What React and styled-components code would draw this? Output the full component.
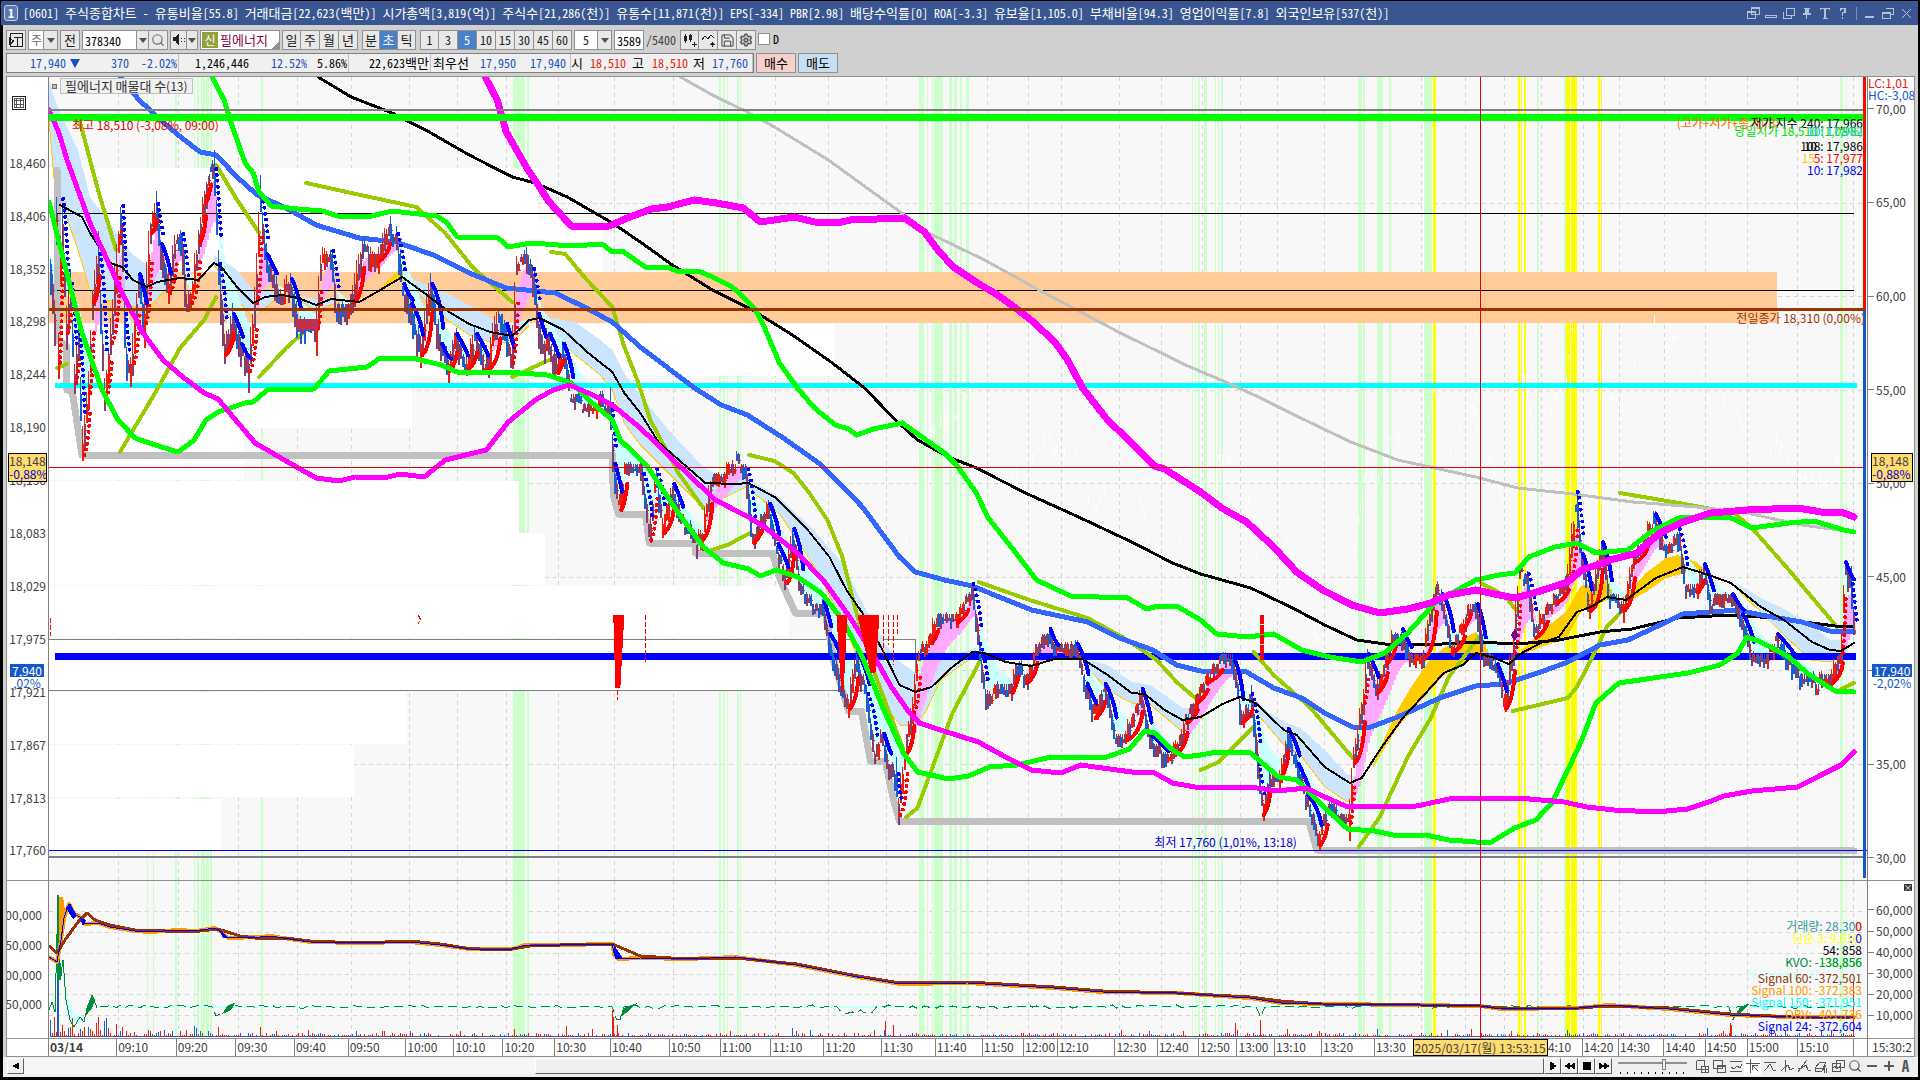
import React, {useState} from 'react';
import styled, {createGlobalStyle, css} from 'styled-components';
import {Search, Save, Settings} from 'lucide-react';


const TITLE = '[0601] 주식종합차트 - 유통비율[55.8] 거래대금[22,623(백만)] 시가총액[3,819(억)] 주식수[21,286(천)] 유통수[11,871(천)] EPS[-334] PBR[2.98] 배당수익률[0] ROA[-3.3] 유보율[1,105.0] 부채비율[94.3] 영업이익률[7.8] 외국인보유[537(천)]'

const priceLabels = ['18,460', '18,406', '18,352', '18,298', '18,244', '18,190', '18,136', '18,083', '18,029', '17,975', '17,921', '17,867', '17,813', '17,760']
const ratioLabels = ['70,00', '65,00', '60,00', '55,00', '50,00', '45,00', '40,00', '35,00', '30,00']
const obvLabels = ['00,000', '50,000', '00,000', '50,000']
const volumeLabels = ['60,000', '50,000', '40,000', '30,000', '20,000', '10,000']

// [x, label] for every vertical grid line
const ticks = [
    [49, '03/14'], [118, '09:10'], [178, '09:20'], [238, '09:30'], [297, '09:40'], [351, '09:50'],
    [409, '10:00'], [457, '10:10'], [506, '10:20'], [558, '10:30'], [614, '10:40'], [673, '10:50'],
    [724, '11:00'], [775, '11:10'], [828, '11:20'], [886, '11:30'], [940, '11:40'], [987, '11:50'],
    [1028, '12:00'], [1061, '12:10'], [1119, '12:30'], [1161, '12:40'], [1202, '12:50'], [1240, '13:00'],
    [1277, '13:10'], [1324, '13:20'], [1377, '13:30'], [1421, '13:40'], [1465, '13:50'], [1504, '14:00'],
    [1541, '14:10'], [1583, '14:20'], [1619, '14:30'], [1664, '14:40'], [1705, '14:50'], [1747, '15:00'],
    [1797, '15:10'], [1853, ''],
]

// [x, width] of the signal stripes
const greenStripes = [
    [147, 1], [153, 1], [175, 2], [194, 1], [197, 2], [201, 4], [206, 3], [210, 2], [261, 2], [513, 12], [527, 2],
    [719, 2], [723, 2], [727, 1], [737, 2], [740, 1], [919, 5], [927, 1], [932, 1], [934, 9], [949, 3], [954, 3],
    [959, 2], [965, 3], [1191, 1], [1194, 1], [1197, 2], [1203, 3], [1214, 1], [1217, 1], [1220, 2], [1357, 4],
    [1362, 2], [1376, 6], [1388, 2], [1423, 8], [1536, 2], [1563, 2], [1839, 3], [1845, 1],
]
const yellowStripes = [[1432, 3], [1517, 2], [1520, 1], [1523, 2], [1565, 4], [1570, 6], [1597, 2], [1600, 1]]

// volume profile: [top, right edge]
const profile = [
    [168, 538], [220, 603], [324, 834], [376, 412], [428, 244], [481, 519], [533, 545], [586, 789],
    [639, 915], [692, 406], [745, 354], [799, 221],
]

const upperMagenta = '485,77 497,100 506,132 526,167 549,202 571,226 609,226 627,218 651,209 667,207 694,200 716,203 743,208 760,222 794,217 814,222 837,223 850,220 904,218 924,232 939,252 953,267 977,283 997,295 1015,308 1033,322 1055,343 1067,360 1082,388 1107,420 1131,443 1154,466 1164,469 1200,492 1221,508 1246,522 1273,547 1296,572 1322,590 1351,605 1379,613 1407,609 1430,603 1448,595 1475,590 1494,594 1514,598 1533,593 1567,582 1581,570 1613,559 1636,553 1659,533 1682,522 1710,513 1746,510 1797,508 1820,512 1843,513 1853,517'
const lowerMagenta = '49,110 59,133 67,160 90,223 104,253 122,293 143,333 163,360 184,378 204,393 218,399 233,417 255,443 286,461 316,478 339,481 355,477 384,478 400,474 424,477 445,460 486,450 508,422 535,400 553,390 569,385 588,393 612,405 640,428 678,465 715,500 748,517 764,527 797,553 825,583 850,618 874,657 891,687 907,710 919,723 940,730 978,742 1005,757 1031,770 1060,773 1080,765 1131,772 1154,773 1172,783 1200,788 1250,787 1276,791 1306,788 1324,797 1347,807 1416,806 1453,798 1517,798 1563,802 1586,807 1613,810 1655,812 1687,809 1705,803 1723,796 1751,791 1797,787 1820,775 1840,765 1853,752'
const upperGreen = '212,77 224,100 231,123 245,163 253,173 259,192 271,206 298,209 322,211 337,216 367,217 392,211 437,216 447,223 457,237 498,238 508,247 531,243 571,246 602,244 612,252 622,251 645,267 667,267 676,271 698,271 712,277 732,287 754,308 763,325 779,363 797,388 814,408 835,425 848,429 856,435 873,429 902,423 944,453 956,465 976,493 987,517 1013,550 1036,580 1070,596 1127,598 1146,609 1158,606 1176,606 1200,620 1216,634 1246,637 1273,634 1301,650 1329,657 1361,662 1384,653 1407,633 1434,603 1453,592 1475,580 1498,575 1514,573 1528,557 1554,547 1576,543 1595,553 1627,550 1650,532 1678,518 1728,517 1751,528 1788,523 1813,521 1843,530 1853,532'
const lowerGreen = '49,202 61,250 82,333 102,390 118,420 135,438 155,445 178,452 194,440 206,420 218,412 245,403 253,402 267,390 314,389 329,371 367,367 380,358 412,358 441,365 457,372 506,372 547,375 571,383 592,403 612,420 620,440 646,465 678,513 703,547 723,563 748,569 760,576 776,570 797,577 821,593 842,620 862,657 882,707 903,753 917,772 948,779 968,776 989,767 1017,765 1050,757 1103,758 1129,749 1144,731 1154,733 1172,750 1184,757 1200,755 1216,752 1250,753 1278,777 1296,780 1319,803 1347,829 1374,831 1397,836 1425,835 1448,840 1489,843 1514,828 1535,820 1551,803 1567,770 1581,740 1595,703 1618,683 1659,677 1687,673 1719,665 1737,653 1746,637 1760,642 1788,657 1806,673 1834,691 1853,692'
const blueAverage = '120,77 139,100 163,122 178,135 200,152 216,155 237,177 257,195 286,208 316,225 359,238 396,242 433,255 469,273 506,288 555,293 584,307 612,322 640,347 694,388 721,405 747,415 783,438 821,465 862,507 899,557 915,572 944,580 972,586 1001,598 1031,610 1087,622 1119,638 1152,650 1176,665 1200,671 1246,672 1273,688 1301,698 1324,713 1352,727 1370,727 1397,717 1439,698 1475,686 1503,684 1540,672 1567,662 1599,645 1627,640 1655,627 1682,614 1737,610 1760,615 1801,622 1829,631 1853,632'
const longAverage = '318,77 351,97 392,113 429,132 469,155 512,177 535,183 567,197 612,223 640,242 672,265 712,290 752,310 792,335 832,363 864,388 895,420 917,440 948,457 976,468 1025,493 1078,517 1131,542 1172,563 1200,574 1250,588 1292,608 1324,625 1356,640 1384,644 1425,645 1475,642 1517,644 1558,640 1599,632 1631,629 1677,618 1728,615 1774,618 1811,623 1834,626 1853,626'
const greyAverage = '680,77 712,95 747,112 774,127 828,160 872,192 904,215 926,232 984,260 1042,292 1118,332 1185,365 1225,382 1260,398 1300,418 1350,442 1397,460 1475,477 1517,488 1572,494 1632,502 1696,507 1746,513 1801,525 1853,532'
const shortAverage = '60,205 82,217 90,233 110,263 122,267 133,280 147,287 157,282 180,278 198,280 214,263 222,268 237,287 253,303 265,297 282,295 298,298 316,305 331,299 359,302 380,290 402,277 424,293 449,312 469,324 490,332 512,336 529,320 539,318 563,330 588,353 612,372 624,393 640,413 658,442 682,463 705,483 736,484 748,483 776,498 805,527 829,557 846,590 862,613 882,650 899,685 915,692 931,687 952,667 972,652 984,653 1005,662 1031,666 1054,659 1082,659 1107,675 1131,693 1144,694 1164,710 1182,720 1200,717 1222,704 1239,697 1255,703 1283,730 1296,735 1324,767 1349,783 1361,778 1379,750 1402,718 1425,693 1443,673 1462,665 1475,653 1494,658 1508,664 1521,653 1540,643 1558,637 1576,612 1590,607 1606,597 1625,600 1655,578 1682,567 1705,574 1730,583 1760,607 1783,620 1811,642 1829,650 1840,651 1853,643'
const stepLow = '57,170 57,340 66,345 67,390 72,390 82,455 612,455 613,495 618,514 645,514 649,543 695,543 695,553 772,553 780,580 795,613 825,613 833,660 848,711 861,711 870,761 885,762 893,800 899,821 1308,821 1316,850 1853,851'

const oliveLines = [
    '80,122 90,160 98,190 116,250', '216,165 237,200 259,233',
    '306,183 351,193 416,207 445,233 473,268 512,302',
    '551,252 565,254 584,277 612,307 624,347 637,380 650,420 678,473 703,508',
    '120,452 155,393 180,348 204,320 216,297', '259,377 286,348 306,330', '57,368 67,364', '512,377 551,359',
    '711,550 727,545 750,533', '749,455 774,461 793,473 809,493 827,520 842,557 856,613 874,673 903,750',
    '906,817 917,808 931,770 952,713 980,660', '978,582 1029,600 1087,618 1127,640 1156,660 1176,682 1197,700',
    '1200,770 1218,762 1253,727', '1253,652 1273,675 1310,708 1352,758',
    '1358,847 1379,817 1407,757 1430,718 1448,677 1478,637', '1480,583 1503,595 1517,612',
    '1512,711 1567,698 1576,687 1590,660 1606,627 1620,612',
    '1619,493 1678,503 1733,513 1751,528 1788,570 1836,627', '1840,689 1853,683',
]

// clouds: [x, top, bottom]
const blueClouds = [
    [[49, 80, 120], [55, 100, 190], [66, 125, 215], [78, 150, 250], [90, 197, 290], [102, 213, 300], [118, 235, 300], [131, 253, 305], [147, 265, 310], [165, 275, 290]],
    [[214, 255, 265], [237, 270, 300], [253, 290, 318], [275, 292, 300]],
    [[298, 296, 299], [316, 299, 311], [340, 299, 301]],
    [[402, 275, 277], [440, 290, 315], [469, 305, 335], [490, 318, 342], [512, 325, 343], [529, 318, 325]],
    [[539, 316, 320], [575, 322, 355], [600, 340, 375], [612, 350, 390], [625, 375, 425], [640, 395, 445], [670, 432, 475], [703, 467, 508], [723, 477, 498], [746, 477, 487], [780, 498, 515], [813, 530, 565], [842, 563, 620], [862, 603, 670], [887, 647, 710], [900, 662, 725], [915, 673, 725], [925, 680, 712], [940, 660, 680], [975, 648, 655]],
    [[1080, 658, 660], [1107, 665, 690], [1131, 682, 703], [1150, 685, 705], [1182, 708, 732], [1205, 708, 715]],
    [[1250, 700, 706], [1283, 722, 745], [1300, 728, 755], [1324, 750, 787], [1347, 775, 802], [1361, 777, 782]],
    [[1735, 583, 588], [1760, 598, 612], [1785, 610, 637], [1810, 626, 660], [1830, 640, 662], [1845, 640, 650]],
]
const yellowClouds = [
    [[380, 288, 291], [400, 268, 279], [410, 280, 284]],
    [[1372, 765, 768], [1395, 713, 730], [1410, 688, 712], [1430, 658, 690], [1443, 648, 675], [1460, 640, 666], [1475, 632, 656], [1485, 642, 658], [1503, 660, 664]],
    [[1521, 650, 655], [1545, 628, 645], [1565, 612, 640], [1580, 586, 612], [1606, 580, 600], [1618, 592, 600]],
    [[1625, 595, 603], [1645, 573, 592], [1665, 558, 578], [1677, 555, 575], [1695, 562, 570], [1708, 572, 576]],
]

// turning points of the price
const pricePath = [
    [49, 255], [53, 300], [55, 330], [57, 105], [58, 360], [61, 205], [66, 330], [70, 290], [74, 380], [78, 340], [82, 452],
    [88, 390], [92, 300], [98, 260], [104, 395], [110, 340], [118, 240], [121, 212], [124, 320], [127, 375], [132, 360], [138, 280],
    [144, 320], [150, 230], [156, 210], [160, 250], [168, 290], [175, 240], [181, 240], [186, 305], [190, 300],
    [198, 240], [204, 200], [209, 172], [214, 175], [218, 270], [224, 352], [232, 320], [240, 350], [248, 368],
    [255, 300], [260, 202], [265, 260], [274, 285], [280, 300], [290, 285], [298, 325], [316, 325], [320, 265],
    [331, 257], [336, 310], [345, 315], [352, 300], [362, 248], [370, 260], [378, 258], [388, 232], [396, 240],
    [402, 290], [410, 310], [420, 352], [430, 290], [440, 350], [448, 368], [455, 340], [465, 368], [475, 340],
    [485, 368], [498, 320], [505, 330], [511, 360], [516, 270], [525, 258], [532, 275], [537, 320], [543, 350],
    [548, 340], [556, 370], [562, 350], [570, 395], [580, 404], [588, 410], [600, 403], [610, 410], [613, 470],
    [619, 507], [625, 468], [638, 468], [642, 480], [649, 537], [655, 475], [662, 530], [672, 490], [680, 520],
    [688, 530], [696, 547], [702, 535], [710, 485], [722, 480], [730, 468], [737, 463], [746, 475], [752, 540],
    [760, 520], [768, 510], [776, 550], [785, 580], [792, 535], [800, 590], [812, 605], [822, 607], [828, 640],
    [840, 690], [848, 705], [856, 660], [866, 700], [874, 757], [882, 740], [888, 765], [896, 780], [898, 812],
    [905, 750], [912, 710], [918, 655], [930, 640], [936, 620], [955, 620], [966, 600], [971, 590], [978, 650],
    [985, 705], [995, 690], [1010, 690], [1016, 665], [1025, 680], [1035, 650], [1048, 635], [1055, 655],
    [1075, 650], [1085, 690], [1093, 715], [1103, 690], [1113, 735], [1125, 737], [1140, 695], [1148, 740],
    [1165, 762], [1175, 750], [1185, 720], [1195, 700], [1205, 680], [1220, 660], [1232, 665], [1240, 720],
    [1250, 700], [1257, 770], [1261, 812], [1268, 775], [1278, 775], [1286, 735], [1296, 770], [1305, 800],
    [1318, 842], [1325, 812], [1335, 815], [1348, 820], [1352, 760], [1362, 700], [1366, 660], [1375, 690], [1385, 660],
    [1393, 635], [1400, 635], [1408, 658], [1422, 655], [1434, 588], [1440, 600], [1450, 650], [1462, 625],
    [1468, 605], [1475, 610], [1482, 655], [1495, 670], [1503, 706], [1512, 650], [1518, 573], [1526, 580],
    [1533, 635], [1545, 610], [1555, 600], [1566, 580], [1575, 498], [1580, 560], [1588, 608], [1600, 548],
    [1608, 600], [1622, 607], [1632, 560], [1645, 535], [1653, 520], [1662, 550], [1668, 550], [1677, 535],
    [1684, 585], [1695, 590], [1702, 570], [1710, 605], [1730, 600], [1740, 620], [1750, 657], [1765, 657],
    [1775, 640], [1790, 665], [1800, 678], [1815, 686], [1830, 680], [1840, 650], [1843, 568], [1850, 590], [1853, 640],
]

const obvBrown = '49,946 57,953 65,940 78,922 87,913 95,920 110,925 135,930 165,931 200,931 218,929 240,936 255,938 285,938 310,941 360,943 410,941 440,944 465,948 495,950 512,949 530,946 560,945 612,944 640,956 686,959 735,958 796,964 857,976 900,983 967,982 1053,987 1102,991 1176,993 1249,997 1280,1001 1321,1004 1419,1005 1480,1006 1500,1008 1578,1008 1607,1006 1668,1008 1729,1014 1790,1017 1853,1018'
const obvBlue = '49,957 57,962 61,940 64,918 69,904 74,914 80,917 85,924 98,923 110,927 135,931 150,932 178,930 196,931 214,928 220,931 228,938 260,937 270,936 310,942 360,943 410,942 440,945 470,949 512,949 525,945 560,945 612,944 614,955 618,959 640,958 686,959 735,957 796,965 857,977 900,984 967,983 1053,988 1102,992 1176,993 1249,998 1280,1003 1321,1004 1419,1005 1480,1006 1500,1009 1578,1008 1607,1005 1668,1009 1729,1015 1790,1017 1853,1017'

let seed = 7

const random = () => {
    seed = (seed * 16807) % 2147483647
    return seed / 2147483647
}

const cloudPoints = cloud => [
    ...cloud.map(([x, top]) => `${x},${top}`),
    ...[...cloud].reverse().map(([x, , bottom]) => `${x},${bottom}`),
].join(' ')

const priceAt = x => {
    const i = Math.max(1, pricePath.findIndex(p => p[0] >= x))
    const [x0, y0] = pricePath[i - 1]
    const [x1, y1] = pricePath[i]
    return y0 + (y1 - y0) * (x - x0) / (x1 - x0)
}

const buildCandles = () => {
    const candles = {up: '', down: '', pink: '', aqua: '', ghost: ''}
    let fast = priceAt(49)
    let slow = fast

    for (let x = 50; x < 1854; x += 2) {
        const price = priceAt(x)
        const next = priceAt(Math.min(x + 2, 1853))
        const step = Math.round(price / 10) * 10
        const reach = Math.min(30, Math.abs(next - price))
        const wick = x < 560 ? 15 : 9
        const high = Math.round(step - random() * wick - reach / 2)
        const low = Math.round(step + random() * wick + reach / 2)
        const side = next < price ? 'up' : 'down'
        const other = side === 'up' ? 'down' : 'up'

        candles[side] += `M${x + 0.5} ${high}V${low}M${x} ${step + 0.5}h3`
        candles[random() > 0.45 ? other : side] += `M${x + 1.5} ${step - 6}V${low}`
        fast += (price - fast) * 0.35
        slow += (price - slow) * 0.1
        candles[fast < slow ? 'pink' : 'aqua'] += `M${x} ${Math.round(fast)}V${Math.round(slow)}`
        if (x > 880 && random() > 0.5) {
            candles.ghost += `M${x} ${step - 205}v${Math.round(random() * 10) + 2}`
        }
    }
    return candles
}

// parabolic dots trailing each leg of the price
const buildTrails = () => {
    const trails = []
    for (let i = 1; i < pricePath.length; i++) {
        const [x0, y0] = pricePath[i - 1]
        const [x1, y1] = pricePath[i]
        const size = Math.abs(y1 - y0)
        if (size < 18 || x1 < 60) continue
        const rising = y1 < y0
        const d = rising
            ? `M${x0 + 2} ${y0 + 3}Q${x1} ${y0 - 4} ${x1 + 2} ${y1 + size * 0.3 + 4}`
            : `M${x0 + 2} ${y0 - 6}Q${x1} ${y0 + 8} ${x1 + 3} ${y1 - size * 0.3 - 4}`
        trails.push({d, rising, dotted: size / (x1 - x0) > 7})
    }
    return trails
}

const buildVolume = () => {
    const bars = {red: '', blue: ''}
    for (let x = 50; x < 1854; x += 2) {
        const burst = x < 110 ? 18 : x < 220 ? 6 : 3
        const r = random()
        const h = 1 + Math.round(r * r * burst + (random() > 0.95 ? 5 : 0))
        bars[random() > 0.35 ? 'red' : 'blue'] += `M${x + 0.5} 1037v${-h}`
        bars.blue += `M${x + 1.5} 1037v-1`
    }
    bars.red += 'M98 1037v-20M116 1037v-13M218 1037v-10M260 1037v-10M566 1037v-11M612 1037v-27M613 1037v-20M617 1037v-12M885 1037v-16M893 1037v-12M1235 1037v-14M1260 1037v-17M1730 1037v-14M1731 1037v-12M1853 1037v-55'
    return bars
}

const buildKvo = () => {
    let line = 'M100 1007'
    for (let x = 104; x < 1853; x += 4) {
        let y = 1008 - Math.round(random() * 3)
        if (x > 214 && x < 228) y += 8
        if (x > 612 && x < 622) y += 14
        if (x > 836 && x < 876) y += 5
        if (x > 1258 && x < 1264) y += 9
        if (x > 1730 && x < 1736) y += 13
        line += `L${x} ${y}`
    }
    return line
}

const candles = buildCandles()
const trails = buildTrails()
const volume = buildVolume()
const kvo = buildKvo()


const Stripes = ({top, height}) => (<g>
    {ticks.slice(1).map(([x]) => <line key={x} x1={x} x2={x} y1={top} y2={top + height} stroke="#d4d4d4" strokeDasharray="4 4"/>)}
    {greenStripes.map(([x, w]) => <rect key={x} x={x} y={top} width={w} height={height} fill="#ccffcc"/>)}
    {yellowStripes.map(([x, w]) => <rect key={x} x={x} y={top} width={w} height={height} fill="#ffff00"/>)}
</g>)

const Line = ({points, color, width}) => (
    <polyline points={points} fill="none" stroke={color} strokeWidth={width} strokeLinejoin="round" strokeLinecap="round"/>
)

const PriceChart = () => (
    <Plot viewBox="49 77 1817 803" preserveAspectRatio="none" shapeRendering="crispEdges" role="img" aria-label="필에너지">
        {[203, 296, 390, 483, 577, 670, 764].map(y => <line key={y} x1="49" x2="1862" y1={y} y2={y} stroke="#d4d4d4" strokeDasharray="4 4"/>)}
        <Stripes top={77} height={803}/>
        {profile.map(([y, right]) => <rect key={y} x="49" y={y} width={right - 49} height="52" fill="#fff"/>)}
        <rect x="49" y="272" width="1727" height="51" fill="#ffcc99"/>
        <path d="M49 639H915V690H49" fill="none" stroke="#808080"/>

        <path d={candles.ghost} stroke="#fff"/>
        {blueClouds.map((c, i) => <polygon key={i} points={cloudPoints(c)} fill="#cce5ff"/>)}
        {yellowClouds.map((c, i) => <polygon key={i} points={cloudPoints(c)} fill="#ffcc00"/>)}
        {blueClouds.map((c, i) => <Line key={i} points={c.map(p => `${p[0]},${p[2]}`).join(' ')} color="#ffcc00" width="1"/>)}
        <path d={candles.aqua} stroke="#ccffff" strokeWidth="2"/>
        <path d={candles.pink} stroke="#ffaaff" strokeWidth="2"/>
        <Line points={stepLow} color="#c0c0c0" width="7"/>

        <path d="M55 656.5H1855" stroke="#0000ff" strokeWidth="7"/>
        <path d="M55 385.5H1856" stroke="#00ffff" strokeWidth="5"/>
        <path d="M57 213.5H1853M57 290.5H1853" stroke="#000"/>

        {oliveLines.map(points => <Line key={points} points={points} color="#99cc00" width="4"/>)}
        <Line points={greyAverage} color="#c0c0c0" width="3"/>
        <Line points={longAverage} color="#000" width="3"/>
        <Line points={blueAverage} color="#3366ff" width="5"/>

        <path d={candles.down} fill="none" stroke="#1a5fcc"/>
        <path d={candles.up} fill="none" stroke="#e8200c"/>
        {trails.map(({d, rising, dotted}) => (
            <path key={d} d={d} fill="none" stroke={rising ? '#ff0000' : '#0000ff'} strokeWidth="4"
                strokeLinecap="round" strokeDasharray={dotted ? '0 6' : 'none'}/>
        ))}
        <path d="M296 319h22v11h-22z" fill="#c03050"/>
        <Line points={shortAverage} color="#000" width="2"/>
        <Line points={upperGreen} color="#00ff00" width="5"/>
        <Line points={lowerGreen} color="#00ff00" width="5"/>
        <Line points={lowerMagenta} color="#ff00ff" width="5"/>
        <Line points={upperMagenta} color="#ff00ff" width="7"/>

        <path d="M613 615h11l-4 73h-5zM836 615h11l-4 78h-2zM857 615h22l-4 58h-5z" fill="#ff0000"/>
        <path d="M617 690v10M645 615v48M883 615v40M888 615v30M893 615v50M897 615v20M50 618v18M418 615l2 4l-2 5" fill="none" stroke="#ff0000" strokeDasharray="5 2"/>
        <path d="M1261 615v45" stroke="#ff0000" strokeWidth="4" strokeDasharray="9 1"/>
        <path d="M1514 629l4 6l-4 6l-4 -6z" fill="#800080"/>

        <path d="M49 110H1862M49 857H1862" stroke="#808080" strokeWidth="2"/>
        <path d="M49 309.5H1862" stroke="#993300" strokeWidth="3"/>
        <path d="M49 850.5H1866" stroke="#0000ff"/>
        <path d="M49 117.5H1862" stroke="#00ff00" strokeWidth="7"/>
        <path d="M1479.5 77V880M49 467.5H1862" stroke="#e00010"/>
        <path d="M1863.5 77V310" stroke="#f01000" strokeWidth="3"/>
        <path d="M1863.5 310V878" stroke="#1558cc" strokeWidth="3"/>
    </Plot>
)

const VolumeChart = () => (
    <Plot viewBox="49 881 1817 157" preserveAspectRatio="none" shapeRendering="crispEdges" role="img" aria-label="거래량">
        {[911, 932, 953, 974, 994, 1015].map(y => <line key={y} x1="49" x2="1862" y1={y} y2={y} stroke="#d4d4d4" strokeDasharray="4 4"/>)}
        <Stripes top={881} height={157}/>
        <polygon points="62,965 66,990 72,1010 80,1018 84,1018 74,1027 66,1010" fill="#ccffff"/>
        <path d="M97 1007H1853" stroke="#ccffff" strokeWidth="2"/>
        <path d={volume.red} stroke="#e8200c"/>
        <path d={volume.blue} stroke="#1a5fcc"/>
        <path d="M57.5 1037V950" stroke="#1a5fcc" strokeWidth="2"/>
        <path d="M49 1010L52 1002L55 1012L58 895L60 980L63 960L66 1000L70 1020L74 1027L80 1017L84 1022L87 1008L92 995L97 1008" fill="none" stroke="#008c3a"/>
        <path d={kvo} fill="none" stroke="#008c3a" strokeDasharray="9 5"/>
        <path d="M57 895h2v85h-2zM59 950l3 25l-3 5zM84 1018l8 -23l3 5l-3 8zM222 1014l6 -9l7 -2l-4 7zM619 1018l6 -11l12 -4l-10 9zM1733 1018l6 -11l10 -4l-8 9z" fill="#008c3a"/>
        <path d="M59 897h4l3 20l-4 20l-3 15z" fill="#ff9900"/>
        <Line points={obvBlue} color="#ff9900" width="4"/>
        <Line points={obvBrown} color="#993300" width="3"/>
        <Line points={obvBlue} color="#0000ff" width="1"/>
        <path d="M66 908l4 -5l7 13l-4 3zM80 918l6 2l-3 6zM218 929l10 9h-5zM613 944l10 15h-8z" fill="#0000ff"/>
        <path d="M1479.5 881V1038" stroke="#e00010"/>
    </Plot>
)

const Icon = ({d, size = 14, width = 1}) => (
    <svg width={size} height={size} viewBox="0 0 14 14" fill="none" stroke="currentColor" strokeWidth={width} shapeRendering="crispEdges" aria-hidden="true">
        <path d={d}/>
    </svg>
)

// Hangul is set one size larger than the Latin half-width glyphs
const Mixed = ({children}) => children.split(/([가-힣]+)/).map((run, i) => (
    i % 2 ? <Hangul key={i}>{run}</Hangul> : run
))

const windowIcons = [
    ['새 창', 'M5.5 1.5h8v7h-8zM5.5 2.5h8M1.5 5.5h8v7h-8zM1.5 6.5h8'], ['접기', 'M1.5 9.5h11v2h-11z'], ['복사', 'M4.5 2.5h8v7h-8zM1.5 5.5v7h8v-3'],
    ['고정', 'M4 2.5h6M5.5 2v6M6.5 2v11M7.5 2v6M8.5 2v6M3 7.5h8M3 8.5h8'], ['글꼴', 'M2.5 4V2.5h9V4M6.5 2v10M7.5 2v10M5 12.5h5'],
    ['도움말', 'M4.5 4.5v-2h5v4h-3v3M5.5 2v2M8.5 2v4M6.5 11v2'],
]

const chartTools = [
    ['추가', 'M1.5 1.5h8v6M1.5 1.5v9h5M6.5 7.5h7v6h-7zM10 7v6M7 10.5h6'], ['겹치기', 'M1.5 1.5h9v8h-9zM5.5 6.5h8v7h-8zM6 7.5h8'],
    ['범위', 'M1 2.5h12M1 12.5h12M2 8l3 2l3 -3l3 2l2 -4'], ['십자선', 'M0 4.5h14M4.5 0v14M6 6l6 6M6.5 6v5M6.5 6.5h5'],
    ['추세', 'M1 3.5h12M1 12l3 -3l3 -4l3 6l3 1'], ['세로선', 'M5.5 1v12M1 12l3 -3l4 -3l2 5l4 -2'],
    ['사선', 'M1 13l9 -12M1 10l4 -1l4 -3l2 5l3 1'], ['지우기', 'M1 9l5 -6h6l-3 6h-8v3h7l4 -6M10.5 9v5M12.5 9v5'],
    ['차트', 'M5.5 1.5h8v7h-8zM1.5 4.5h8v8h-8zM2 9l2 -2l2 3l3 -3'],
]

const App = () => {

    const [code, setCode] = useState('378340');
    const [period, setPeriod] = useState('초');
    const [unit, setUnit] = useState('5');
    const [count, setCount] = useState('3589');
    const [zoom, setZoom] = useState(67);

    return(<Desktop>
        <GlobalStyle/>
        <TitleBar>
            <WindowNumber>1</WindowNumber>
            <Title><Mixed>{TITLE}</Mixed></Title>
            {windowIcons.map(([name, d]) => <TitleButton key={name} aria-label={name}><Icon d={d}/></TitleButton>)}
            <TitleRule/>
            <TitleButton aria-label="최소화"><Icon d="M2 10.5h9M2 11.5h9"/></TitleButton>
            <TitleButton aria-label="이전 크기"><Icon d="M4.5 2.5h8v6h-3M1.5 6.5h8v6h-8zM2 7.5h7"/></TitleButton>
            <TitleButton aria-label="닫기"><Icon d="M3 3l9 9M12 3l-9 9"/></TitleButton>
        </TitleBar>

        <Body>
            <Toolbar>
                <Tool aria-label="패널"><Icon size={16} d="M2.5 1.5h10v11h-10zM5 4.5h7M8.5 5v7M1 5l4 3l-4 3z"/></Tool>
                <Combo $width="30px">
                    <Select aria-label="구분" defaultValue="주" $muted><option>주</option></Select>
                </Combo>
                <Tool><Mixed>전</Mixed></Tool>
                <Group>
                    <Field aria-label="종목코드" value={code} onChange={e => setCode(e.target.value)} $width="54px"/>
                    <Tool aria-label="종목 목록" $width="13px"><Arrow/></Tool>
                    <Tool aria-label="검색" $width="19px"><Search size={14} color="#707070"/></Tool>
                </Group>
                <Group>
                    <Tool aria-label="소리" $width="17px"><Icon d="M1 4.5h4M1 5.5h4M1 6.5h4M1 7.5h4M4.5 3v7M5.5 2v9M6.5 1v11M9 5.5h1M9 8.5h1M12 5.5h1M12 8.5h1"/></Tool>
                    <Tool aria-label="소리 설정" $width="11px"><Arrow/></Tool>
                </Group>
                <StockName><NewMark>신</NewMark><Mixed>필에너지</Mixed></StockName>
                <Group $spaced>
                    {['일', '주', '월', '년'].map(p => <Tool key={p} $width="19px" $on={p === period} onClick={() => setPeriod(p)}><Mixed>{p}</Mixed></Tool>)}
                </Group>
                <Group $spaced>
                    {['분', '초', '틱'].map(p => <Tool key={p} $width="18px" $on={p === period} onClick={() => setPeriod(p)}><Mixed>{p}</Mixed></Tool>)}
                </Group>
                <Group>
                    {['1', '3', '5', '10', '15', '30', '45', '60'].map(u => <Tool key={u} $width="19px" $on={u === unit} onClick={() => setUnit(u)}>{u}</Tool>)}
                </Group>
                <Combo $width="38px">
                    <Select aria-label="간격" defaultValue="5"><option>5</option></Select>
                </Combo>
                <Field aria-label="봉 개수" value={count} onChange={e => setCount(e.target.value)} $width="30px" $boxed/>
                <Total>/5400</Total>
                <Group>
                    <Tool aria-label="봉 추가" $width="19px"><Icon d="M2.5 1v9M1.5 3v5M3.5 3v5M7.5 1v8M6.5 2v5M8.5 2v5M9 11.5h5M11.5 9v5"/></Tool>
                    <Tool aria-label="지표 추가" $width="19px"><Icon d="M1 7l3 -4l3 3l3 -4l3 3M9 11.5h5M11.5 9v5M10 10.5h3"/></Tool>
                    <Tool aria-label="저장" $width="19px"><Save size={15} color="#606060"/></Tool>
                    <Tool aria-label="설정" $width="19px"><Settings size={14} color="#606060" strokeWidth={3}/></Tool>
                </Group>
                <CheckLabel><Check type="checkbox"/>D</CheckLabel>
            </Toolbar>

            <QuoteRow>
                <Quote>
                    <Cell $width="172px"><Num $c="#1b50c0" $w="59px">17,940</Num><Down/><Num $c="#1b50c0" $w="49px">370</Num><Num $c="#1b50c0" $w="48px">-2.02%</Num></Cell>
                    <Cell $width="170px"><Num $w="70px">1,246,446</Num><Num $c="#1b50c0" $w="58px">12.52%</Num><Num $w="40px">5.86%</Num></Cell>
                    <Cell $width="82px"><Num $w="80px"><Mixed>22,623백만</Mixed></Num></Cell>
                    <Cell $width="140px"><Num $w="38px"><Mixed>최우선</Mixed></Num><Num $c="#1b50c0" $w="47px">17,950</Num><Num $c="#1b50c0" $w="50px">17,940</Num></Cell>
                    <Cell $width="182px"><Num $w="12px"><Mixed>시</Mixed></Num><Num $c="#e8200c" $w="43px">18,510</Num><Num $w="18px"><Mixed>고</Mixed></Num><Num $c="#e8200c" $w="44px">18,510</Num><Num $w="17px"><Mixed>저</Mixed></Num><Num $c="#1b50c0" $w="43px">17,760</Num></Cell>
                </Quote>
                <OrderButton $bg="#f6d0cb"><Mixed>매수</Mixed></OrderButton>
                <OrderButton $bg="#c8dff3"><Mixed>매도</Mixed></OrderButton>
            </QuoteRow>

            <ChartPanel>
                <LeftAxis>
                    <TableButton aria-label="데이터 표"><Icon d="M1.5 1.5h11v11h-11zM1 4.5h12M1 8.5h12M4.5 2v11M8.5 2v11"/></TableButton>
                    <PriceScale>{priceLabels.map(l => <span key={l}>{l}</span>)}</PriceScale>
                    <CursorBadge $left><span>18,148</span><b>-0,88%</b></CursorBadge>
                    <LastBadge $left><b>7,940</b><span>,02%</span></LastBadge>
                </LeftAxis>
                <PlotArea>
                    <PriceChart/>
                    <ProfileTag><TagBox/><TagName><Mixed>필에너지 매물대 수(13)</Mixed></TagName></ProfileTag>
                    <Note $c="#e00000" $top="5.2%" $left="23px">최고 18,510 (-3,08%, 09:00)</Note>
                    <Note $c="#993300" $top="29.3%" $right="2px">전일종가 18,310 (0,00%)</Note>
                    <Note $c="#0000cc" $top="94.5%" $left="60.8%">최저 17,760 (1,01%, 13:18)</Note>
                    <AverageLegend>
                        <Row $height="8px"><Tag $c="#ff6600" $shift="84px">(고가+저가+종가)/3:</Tag><Tag $c="#000">저가 지수 240: 17,966</Tag></Row>
                        <Row $height="15px"><Tag $c="#00bfff">10: 17,982</Tag><Tag $c="#00e000">당일시가 18,510 (1,08%)</Tag></Row>
                        <Row><Tag $c="#000" $shift="46px">10</Tag><Tag $c="#000">108: 17,986</Tag></Row>
                        <Row><Tag $c="#ffcc00" $shift="48px">15</Tag><Tag $c="#ff0000">5: 17,977</Tag></Row>
                        <Row><Tag $c="#0000ff">10: 17,982</Tag></Row>
                    </AverageLegend>
                </PlotArea>
                <RightAxis>
                    <Limit $c="#e8200c">LC:1,01</Limit>
                    <Limit $c="#1558cc">HC:-3,08</Limit>
                    <RatioScale>{ratioLabels.map(l => <span key={l}>{l}</span>)}</RatioScale>
                    <CursorBadge><span>18,148</span><b>-0,88%</b></CursorBadge>
                    <LastBadge><b>17,940</b><span>-2,02%</span></LastBadge>
                </RightAxis>

                <LeftAxis>
                    <ObvScale>{obvLabels.map((l, i) => <span key={i}>{l}</span>)}</ObvScale>
                </LeftAxis>
                <PlotArea>
                    <VolumeChart/>
                    <VolumeLegend>
                        <Row><Tag $c="#339999">거래량: 28,300</Tag><Tag $c="#ff0000">0</Tag></Row>
                        <Row><Tag $c="#ffff00" $shift="2px">단순 3: 9,610</Tag><Tag $c="#0000ff">: 0</Tag></Row>
                        <Row><Tag $c="#000">54: 858</Tag></Row>
                        <Row><Tag $c="#00ff00">-38,856</Tag><Tag $c="#008c3a">KVO: -138,856</Tag></Row>
                        <Row $height="4px"><Tag $c="#ccffff">KVO signal27: 15,349</Tag></Row>
                        <Row><Tag $c="#993300">Signal 60: -372,501</Tag></Row>
                        <Row><Tag $c="#ff9900">Signal 100: -372,383</Tag></Row>
                        <Row><Tag $c="#00ffff">Signal 150: -371,951</Tag></Row>
                        <Row><Tag $c="#ff9900">OBV: -401,736</Tag></Row>
                        <Row><Tag $c="#0000ff">Signal 24: -372,604</Tag></Row>
                    </VolumeLegend>
                </PlotArea>
                <RightAxis>
                    <ClosePane aria-label="지표 닫기">×</ClosePane>
                    <VolumeScale>{volumeLabels.map(l => <span key={l}>{l}</span>)}</VolumeScale>
                </RightAxis>

                <AxisCorner/>
                <TimeAxis>
                    {ticks.map(([x, label], i) => (
                        <Time key={x} $grow={(i + 1 < ticks.length ? ticks[i + 1][0] : 1866) - x} $strong={i === 0}>{label}</Time>
                    ))}
                    <CursorTime>2025/03/17(월) 13:53:15</CursorTime>
                </TimeAxis>
                <EndTime>15:30:2</EndTime>
            </ChartPanel>

            <BottomBar>
                <Step aria-label="왼쪽"><Icon size={12} width={2} d="M9 3v8M7 5v4M5 6v2"/></Step>
                <Track><Thumb/></Track>
                <Step aria-label="재생"><Icon size={12} width={2} d="M5 2v10M7 4v6M9 6v2"/></Step>
                <Step aria-label="뒤로"><Icon size={12} width={2} d="M6 3v8M4 5v4M2 6v2M12 3v8M10 5v4M8 6v2"/></Step>
                <Step aria-label="정지"><Icon size={12} width={10} d="M7 2v10"/></Step>
                <Step aria-label="앞으로"><Icon size={12} width={2} d="M2 3v8M4 5v4M6 6v2M8 3v8M10 5v4M12 6v2"/></Step>
                <Slider type="range" aria-label="확대" value={zoom} onChange={e => setZoom(Number(e.target.value))}/>
                {chartTools.map(([name, d]) => <ChartTool key={name} aria-label={name} $on={name === '십자선'}><Icon d={d}/></ChartTool>)}
                <ChartTool aria-label="돋보기"><Search size={14}/></ChartTool>
                <ChartTool aria-label="축소"><Icon d="M2 7h10" width={2}/></ChartTool>
                <ChartTool aria-label="확대"><Icon d="M2 7h10M7 2v10" width={2}/></ChartTool>
                <ChartTool aria-label="자동">A</ChartTool>
            </BottomBar>
        </Body>
    </Desktop>);
}

export default App;


const GlobalStyle = createGlobalStyle`
    * {
        box-sizing: border-box;
    }
    body {
        margin: 0;
        background: #000;
    }
    body, button, input, select {
        font-family: "Noto Sans Mono CJK KR", "Noto Sans CJK KR", sans-serif;
        font-size: 12px;
        line-height: 14px;
    }
    button {
        padding: 0;
        color: inherit;
    }
`

const center = css`
    display: flex;
    align-items: center;
    justify-content: center;
`

const Hangul = styled.span`
    font-size: 13px;
`

const Desktop = styled.div`
    display: flex;
    flex-direction: column;
    height: 100vh;
    min-height: 640px;
    padding: 1px 2px 3px 1px;
    overflow: hidden;
`

const TitleBar = styled.header`
    display: flex;
    align-items: center;
    height: 24px;
    padding: 0 3px;
    background: #3a5691;
    color: #fff;
`

const WindowNumber = styled.span`
    ${center}
    width: 14px;
    height: 16px;
    margin-right: 5px;
    border: 1px solid #c8d2e8;
    border-radius: 3px;
    background: #5d79b5;
    font-weight: bold;
`

const Title = styled.h1`
    flex: 1;
    margin: 0;
    overflow: hidden;
    font-size: 12px;
    font-weight: normal;
    line-height: 18px;
    white-space: nowrap;
`

const TitleButton = styled.button`
    ${center}
    width: 18px;
    height: 18px;
    border: 0;
    background: none;
    color: #b4c0dc;
`

const TitleRule = styled.span`
    width: 1px;
    height: 13px;
    margin: 0 4px;
    background: #8090b0;
`

const Body = styled.main`
    display: flex;
    flex: 1;
    flex-direction: column;
    min-height: 0;
    margin-left: 2px;
    padding: 5px 3px 0;
    background: #d0d0d0;
`

const Toolbar = styled.div`
    display: flex;
    gap: 2px;
    height: 20px;
    margin-bottom: 3px;
`

const Group = styled.div`
    display: flex;
    margin-right: ${p => p.$spaced ? '2px' : '0'};
`

const Tool = styled.button`
    ${center}
    width: ${p => p.$width || '20px'};
    height: 20px;
    border: 1px solid #909090;
    background: ${p => p.$on ? '#4a80c8' : '#e8e8e8'};
    color: ${p => p.$on ? '#fff' : '#202020'};

    & + & {
        border-left: 0;
    }
`

const Arrow = styled.span`
    border: 4px solid transparent;
    border-top: 5px solid #505050;
    border-bottom: 0;
`

const Combo = styled.div`
    position: relative;
    width: ${p => p.$width};

    &::after {
        content: "";
        position: absolute;
        top: 8px;
        right: 3px;
        border: 4px solid transparent;
        border-top: 5px solid #505050;
        border-bottom: 0;
        pointer-events: none;
    }
`

const Select = styled.select`
    width: 100%;
    height: 20px;
    padding: 0 0 0 ${p => p.$muted ? '2px' : '8px'};
    border: 1px solid #909090;
    border-radius: 0;
    background: linear-gradient(to left, #e8e8e8 13px, #909090 13px 14px, #fff 14px);
    color: ${p => p.$muted ? '#707070' : '#202020'};
    appearance: none;
`

const Field = styled.input`
    width: ${p => p.$width};
    height: 20px;
    padding: 0 2px;
    border: 1px solid #909090;
    border-right-width: ${p => p.$boxed ? '1px' : '0'};
    background: #fff;
`

const StockName = styled.div`
    display: flex;
    align-items: center;
    gap: 2px;
    width: 80px;
    border: 1px solid #909090;
    background: linear-gradient(135deg, #fff 92%, #909090 92%);
    color: #880040;
    white-space: nowrap;
`

const NewMark = styled.span`
    ${center}
    width: 16px;
    height: 16px;
    margin-left: 1px;
    background: #94a03c;
    color: #fff;
`

const Total = styled.span`
    width: 32px;
    color: #404040;
    line-height: 20px;
`

const CheckLabel = styled.label`
    display: flex;
    gap: 3px;
    line-height: 18px;
`

const Check = styled.input`
    width: 12px;
    height: 12px;
    margin: 3px 0 0;
    border: 1px solid #909090;
    background: #fff;
    appearance: none;
`

const QuoteRow = styled.div`
    display: flex;
    gap: 2px;
    height: 20px;
    margin-bottom: 3px;
`

const Quote = styled.div`
    display: flex;
    border: 1px solid #808080;
    background: #f0f0f0;
`

const Cell = styled.div`
    display: flex;
    align-items: center;
    width: ${p => p.$width};
    border-right: 1px solid #c0c0c0;
`

const Num = styled.span`
    width: ${p => p.$w};
    color: ${p => p.$c || '#000'};
    text-align: right;
    white-space: nowrap;
`

const Down = styled.span`
    margin-left: 4px;
    border: 5px solid transparent;
    border-top: 9px solid #1b50c0;
    border-bottom: 0;
`

const OrderButton = styled.button`
    width: 40px;
    border: 1px solid #909090;
    background: ${p => p.$bg};
`

const ChartPanel = styled.section`
    display: grid;
    flex: 1;
    grid-template-columns: 42px minmax(0, 1fr) 47px;
    grid-template-rows: minmax(0, 804fr) minmax(0, 158fr) 17px;
    min-height: 0;
    border: 1px solid #909090;
    background: #fff;
    color: #404040;
    font-family: "Noto Sans CJK KR", sans-serif;
`

const LeftAxis = styled.div`
    position: relative;
    overflow: hidden;
    border-right: 1px solid #808080;
    border-bottom: 1px solid #909090;
`

const RightAxis = styled.div`
    position: relative;
    overflow: hidden;
    border-left: 1px solid #808080;
    border-bottom: 1px solid #909090;
`

const PlotArea = styled.div`
    position: relative;
    overflow: hidden;
    border-bottom: 1px solid #909090;
    background: #f8f8f8;
`

const Plot = styled.svg`
    display: block;
    width: 100%;
    height: 100%;
`

const Scale = styled.div`
    position: absolute;
    display: flex;
    flex-direction: column;
    justify-content: space-between;
`

const PriceScale = styled(Scale)`
    top: 9.8%;
    right: 2px;
    bottom: 2.8%;
`

const RatioScale = styled(Scale)`
    top: 3.1%;
    right: 0;
    bottom: 1.9%;
    left: 0;

    span {
        display: flex;
        align-items: center;
        gap: 2px;
        height: 14px;
    }

    span::before {
        content: "";
        width: 6px;
        height: 1px;
        background: #808080;
    }
`

const ObvScale = styled(Scale)`
    top: 17.4%;
    right: 6px;
    bottom: 17%;
`

const VolumeScale = styled(RatioScale)`
    top: 14%;
    bottom: 10%;
`

const TableButton = styled.button`
    ${center}
    position: absolute;
    top: 19px;
    left: 5px;
    width: 14px;
    height: 14px;
    border: 1px solid #202020;
    background: #fff;
`

const CursorBadge = styled.div`
    position: absolute;
    top: 46.8%;
    left: ${p => p.$left ? '1px' : '3px'};
    display: flex;
    flex-direction: column;
    width: ${p => p.$left ? '39px' : '42px'};
    height: 29px;
    overflow: hidden;
    border: 1px solid #000;
    background: #ffdb70;
    line-height: 13px;

    b {
        color: #0000cc;
        font-weight: normal;
    }
`

const LastBadge = styled.div`
    position: absolute;
    top: 73.1%;
    left: ${p => p.$left ? '3px' : '4px'};
    width: ${p => p.$left ? '34px' : '40px'};
    color: #1558cc;
    line-height: 12px;
    text-align: center;

    b {
        display: block;
        background: #1558cc;
        color: #fff;
        font-weight: normal;
        line-height: 13px;
    }
`

const ProfileTag = styled.div`
    position: absolute;
    top: 1px;
    left: 3px;
    display: flex;
    align-items: center;
    gap: 3px;
`

const TagBox = styled.span`
    width: 5px;
    height: 5px;
    border: 1px solid #707070;
    background: #c0c0c0;
`

const TagName = styled.span`
    padding: 0 4px;
    border: 1px solid #c0c0c0;
    background: #f0f0f0;
    color: #303030;
`

const Note = styled.span`
    position: absolute;
    top: ${p => p.$top};
    right: ${p => p.$right};
    left: ${p => p.$left};
    color: ${p => p.$c};
    line-height: 12px;
    white-space: nowrap;
`

const AverageLegend = styled.div`
    position: absolute;
    top: 40px;
    right: 4px;
`

const VolumeLegend = styled.div`
    position: absolute;
    top: 39px;
    right: 5px;
`

// labels of one row are printed over each other
const Row = styled.div`
    display: grid;
    height: ${p => p.$height || '12px'};
    line-height: 12px;
`

const Tag = styled.span`
    grid-area: 1 / 1;
    justify-self: end;
    margin-right: ${p => p.$shift || '0'};
    color: ${p => p.$c};
    white-space: nowrap;
`

const Limit = styled.div`
    color: ${p => p.$c};
    line-height: 12px;
    white-space: nowrap;
`

const ClosePane = styled.button`
    ${center}
    position: absolute;
    top: 3px;
    right: 2px;
    width: 8px;
    height: 7px;
    border: 0;
    background: #303030;
    color: #fff;
    font-size: 9px;
`

const AxisCorner = styled.div`
    border-right: 1px solid #808080;
`

const TimeAxis = styled.div`
    position: relative;
    display: flex;
    line-height: 15px;
`

const Time = styled.span`
    flex: ${p => p.$grow} 1 0;
    min-width: 0;
    overflow: hidden;
    border-left: ${p => p.$strong ? '0' : '1px solid #808080'};
    padding-left: 1px;
    font-weight: ${p => p.$strong ? 'bold' : 'normal'};
    white-space: nowrap;
`

const CursorTime = styled.span`
    position: absolute;
    top: 0;
    left: 75%;
    padding: 0 1px;
    border: 1px solid #000;
    background: #ffdb70;
    white-space: nowrap;
`

const EndTime = styled.span`
    padding-left: 4px;
    overflow: hidden;
    border-left: 1px solid #808080;
    line-height: 15px;
    white-space: nowrap;
`

const BottomBar = styled.footer`
    display: flex;
    align-items: center;
    height: 20px;
    margin: 0 -3px;
    padding: 0 4px 2px;
    background: #efefef;
`

const Step = styled.button`
    ${center}
    width: 17px;
    height: 16px;
    border: 1px solid #fff;
    border-right-color: #606060;
    border-bottom-color: #606060;
    background: #f0f0f0;
    color: #000;
`

const Track = styled.div`
    flex: 1;
    height: 16px;
    background: #f6f6f6;
`

const Thumb = styled.div`
    height: 16px;
    margin-left: 33.6%;
    border: 1px solid #fff;
    border-right-color: #606060;
    border-bottom-color: #606060;
    background: #f0f0f0;
`

const Slider = styled.input`
    width: 69px;
    height: 16px;
    margin: 0 6px;
    background:
        repeating-linear-gradient(to right, #000 0 1px, transparent 1px 7px) 2px 14px / 66px 2px no-repeat,
        linear-gradient(#909090, #909090) 0 4px / 100% 2px no-repeat;
    appearance: none;

    &::-webkit-slider-thumb {
        width: 4px;
        height: 11px;
        margin-top: -4px;
        border: 1px solid #808080;
        background: #f0f0f0;
        appearance: none;
    }
`

const ChartTool = styled.button`
    ${center}
    width: 17px;
    height: 17px;
    border: 0;
    background: ${p => p.$on ? '#fff' : 'none'};
    color: #585858;
    font-size: 15px;
    font-weight: bold;
`
